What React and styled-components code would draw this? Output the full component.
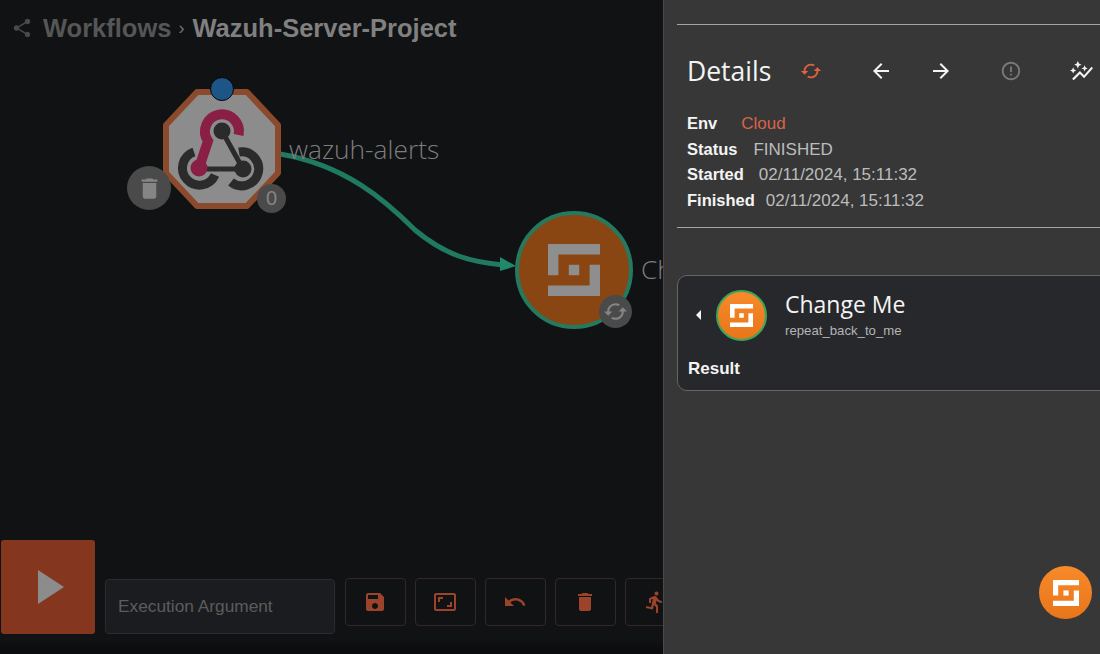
import React from 'react';
import styled, { createGlobalStyle } from 'styled-components';
import {
  MdShare,
  MdDelete,
  MdSave,
  MdAspectRatio,
  MdUndo,
  MdDirectionsRun,
  MdCached,
  MdArrowBack,
  MdArrowForward,
  MdErrorOutline,
  MdAutoGraph,
} from 'react-icons/md';

const GlobalStyle = createGlobalStyle`
  html, body {
    margin: 0;
    padding: 0;
    background: #111214;
    font-family: "Liberation Sans", Arial, sans-serif;
  }
`;

const Page = styled.div`
  display: flex;
  width: 1100px;
  height: 654px;
  overflow: hidden;
`;

const Canvas = styled.main`
  position: relative;
  flex: 0 0 663px;
  display: flex;
  flex-direction: column;
  justify-content: space-between;
  overflow: hidden;
  background: linear-gradient(#111214 0, #111214 640px, #0c0d0e 648px);
`;

const Breadcrumb = styled.header`
  display: flex;
  align-items: center;
  height: 28px;
  padding: 14px 0 0 11px;
  font-size: 25.5px;
  font-weight: 700;
  color: #565656;
`;

const Crumb = styled.span`
  margin-left: 10px;
`;

const Chevron = styled.span`
  margin: 0 8px 0 7px;
  font-size: 18px;
  font-weight: 400;
  color: #707070;
`;

const CurrentCrumb = styled.span`
  color: #808080;
`;

const Edge = styled.svg`
  position: absolute;
  left: 0;
  top: 0;
`;

const Node = styled.div`
  position: absolute;
  left: ${(p) => p.$x}px;
  top: ${(p) => p.$y}px;
`;

const NodeLabel = styled.span`
  position: absolute;
  left: ${(p) => p.$x}px;
  top: ${(p) => p.$y}px;
  font-family: "Open Sans", sans-serif;
  font-weight: 300;
  font-size: 26.3px;
  line-height: 32px;
  white-space: nowrap;
  color: #7d7d7d;
`;

const Round = styled.div`
  position: absolute;
  left: ${(p) => p.$x}px;
  top: ${(p) => p.$y}px;
  width: ${(p) => p.$size}px;
  height: ${(p) => p.$size}px;
  display: flex;
  align-items: center;
  justify-content: center;
  border-radius: 50%;
  background: #4a4a4a;
  color: #858585;
  font-size: 20px;
`;

const Port = styled.div`
  position: absolute;
  left: 210px;
  top: 77px;
  width: 24px;
  height: 24px;
  box-sizing: border-box;
  border: 1px solid #050505;
  border-radius: 50%;
  background: #1d5587;
`;

const ActionNode = styled.div`
  position: absolute;
  left: 515px;
  top: 211px;
  width: 118px;
  height: 118px;
  box-sizing: border-box;
  display: flex;
  align-items: center;
  justify-content: center;
  border: 4px solid #25795f;
  border-radius: 50%;
  background: #8a4612;
`;

const Toolbar = styled.div`
  display: flex;
  align-items: flex-end;
  gap: 10px;
  padding: 0 0 20px 1px;
`;

const PlayButton = styled.button`
  flex: 0 0 94px;
  height: 94px;
  display: flex;
  align-items: center;
  justify-content: center;
  padding: 0;
  border: 0;
  border-radius: 3px;
  background: #85361e;
`;

const PlayTriangle = styled.span`
  width: 0;
  height: 0;
  margin-left: 6px;
  border-style: solid;
  border-width: 17px 0 17px 26px;
  border-color: transparent transparent transparent #8c8c8c;
`;

const ArgumentInput = styled.input`
  flex: none;
  width: 230px;
  min-width: 0;
  height: 55px;
  box-sizing: border-box;
  padding: 0 12px;
  border: 1px solid #2b2c2f;
  border-radius: 4px;
  background: #1b1c1f;
  font-family: "Liberation Sans", Arial, sans-serif;
  font-size: 17.3px;
  outline: none;
  &::placeholder {
    color: #5c5c5c;
    opacity: 1;
  }
`;

const ToolButtons = styled.div`
  display: flex;
  flex: none;
  gap: 9px;
  margin-bottom: 8px;
`;

const ToolButton = styled.button`
  flex: 0 0 61px;
  height: 48px;
  display: flex;
  align-items: center;
  justify-content: center;
  padding: 0 2px 0 0;
  border: 1px solid #33272a;
  border-radius: 4px;
  background: transparent;
  color: #9c432c;
  font-size: 24px;
`;

const Panel = styled.aside`
  position: relative;
  flex: 1;
  min-width: 0;
  box-sizing: border-box;
  padding: 24px 0 0 13px;
  overflow: hidden;
  background: #373737;
  border-left: 1px solid #4a4a4a;
`;

const Rule = styled.hr`
  margin: ${(p) => p.$top || 0}px 0 0;
  border: 0;
  height: 1px;
  background: #a3a3a3;
`;

const DetailsHead = styled.div`
  display: flex;
  align-items: center;
  height: 40px;
  margin: 26px 0 0 10px;
`;

const DetailsTitle = styled.h2`
  margin: 0;
  font-family: "Open Sans", sans-serif;
  font-weight: 400;
  font-size: 26.5px;
  color: #f4f4f4;
`;

const IconSlot = styled.span`
  flex: 0 0 40px;
  display: flex;
  justify-content: center;
  margin-left: ${(p) => p.$gap}px;
  font-size: ${(p) => p.$size || 22}px;
  color: ${(p) => p.$color || '#f4f4f4'};
`;

const InfoList = styled.dl`
  margin: 20px 0 0 10px;
  font-size: 16.5px;
  line-height: 25.7px;
`;

const InfoRow = styled.div`
  display: flex;
`;

const InfoLabel = styled.dt`
  font-weight: 700;
  color: #f4f4f4;
`;

const InfoValue = styled.dd`
  margin: 0 0 0 ${(p) => p.$gap}px;
  font-size: 17px;
  color: ${(p) => p.$color || '#bcbcbc'};
`;

const ResultCard = styled.section`
  position: relative;
  height: 116px;
  box-sizing: border-box;
  margin: 47px -12px 0 0;
  padding: 14px 0 0 18px;
  border: 1px solid #666;
  border-radius: 10px;
  background: #27282c;
`;

const CardHead = styled.div`
  display: flex;
  align-items: center;
`;

const Caret = styled.span`
  width: 0;
  height: 0;
  border-style: solid;
  border-width: 5px 5px 5px 0;
  border-color: transparent #f4f4f4 transparent transparent;
`;

const AppBadge = styled.div`
  width: ${(p) => p.$size}px;
  height: ${(p) => p.$size}px;
  box-sizing: border-box;
  display: flex;
  align-items: center;
  justify-content: center;
  border-radius: 50%;
  border: ${(p) => (p.$ring ? '2px solid #3ba55d' : '0')};
  background: linear-gradient(#f78a2a, #e8751a);
`;

const CardIcon = styled(AppBadge)`
  margin-left: 15px;
`;

const CardText = styled.div`
  margin: -3px 0 0 18px;
`;

const CardTitle = styled.div`
  font-family: "Open Sans", sans-serif;
  font-size: 23px;
  line-height: 30px;
  color: #f4f4f4;
`;

const CardSub = styled.div`
  margin-top: 4px;
  font-size: 13.2px;
  line-height: 16px;
  color: #b5b5b5;
`;

const ResultLabel = styled.div`
  margin: 16px 0 0 -8px;
  font-weight: 700;
  font-size: 17px;
  line-height: 24px;
  color: #f4f4f4;
`;

const Fab = styled.div`
  position: absolute;
  right: 8px;
  bottom: 35px;
`;

const ShuffleMark = ({ size, color }) => (
  <svg width={size} height={size} viewBox="0 0 5 5" fill={color}>
    <path d="M0 0H5V1H1V3H0Z" />
    <path d="M2 2H3V3H2Z" />
    <path d="M4 2H5V5H0V4H4Z" />
  </svg>
);

const WebhookNode = () => (
  <svg width="118" height="120" viewBox="0 0 118 120" fill="none">
    <polygon
      points="34,3 84,3 115,36 115,84 84,117 34,117 3,84 3,36"
      fill="#8c8c8c"
      stroke="#8b4a2b"
      strokeWidth="6"
      strokeLinejoin="round"
    />
    <path d="M59 42L80 80M36 80H80" stroke="#2b2b2b" strokeWidth="5" />
    <path d="M31 63A17 17 0 1 0 52 86" stroke="#2b2b2b" strokeWidth="9" />
    <path d="M76 63A17 17 0 1 1 68 93" stroke="#2b2b2b" strokeWidth="9" />
    <path d="M75.6 46A17 17 0 1 0 45 52L36 79" stroke="#8a1f45" strokeWidth="10" />
    <circle cx="59" cy="42" r="8.5" fill="#2b2b2b" />
    <circle cx="80" cy="80" r="8.5" fill="#2b2b2b" />
    <circle cx="36" cy="79" r="8.5" fill="#8a1f45" />
  </svg>
);

const App = () => {
  return (
    <Page>
      <GlobalStyle />
      <Canvas>
        <Breadcrumb>
          <MdShare size={22} color="#4a4a4a" />
          <Crumb>Workflows</Crumb>
          <Chevron>›</Chevron>
          <CurrentCrumb>Wazuh-Server-Project</CurrentCrumb>
        </Breadcrumb>

        <Edge width="663" height="654" fill="none">
          <path d="M280 154C345 165 385 200 415 230C445 255 470 262 503 265" stroke="#1f7a60" strokeWidth="5" />
          <path d="M500 257L516 266L500 271Z" fill="#1f8a6a" />
        </Edge>
        <Node $x={163} $y={89}>
          <WebhookNode />
        </Node>
        <Port />
        <Round $x={127} $y={166} $size={44}>
          <MdDelete size={27} />
        </Round>
        <Round $x={257} $y={184} $size={29}>0</Round>
        <NodeLabel $x={289} $y={133}>wazuh-alerts</NodeLabel>

        <ActionNode>
          <ShuffleMark size={52} color="#8e8e8e" />
        </ActionNode>
        <Round $x={599} $y={295} $size={33}>
          <MdCached size={25} />
        </Round>
        <NodeLabel $x={641} $y={253}>Change Me</NodeLabel>

        <Toolbar>
          <PlayButton aria-label="Run">
            <PlayTriangle />
          </PlayButton>
          <ArgumentInput placeholder="Execution Argument" />
          <ToolButtons>
            <ToolButton><MdSave /></ToolButton>
            <ToolButton><MdAspectRatio /></ToolButton>
            <ToolButton><MdUndo /></ToolButton>
            <ToolButton><MdDelete /></ToolButton>
            <ToolButton><MdDirectionsRun /></ToolButton>
          </ToolButtons>
        </Toolbar>
      </Canvas>

      <Panel>
        <Rule />
        <DetailsHead>
          <DetailsTitle>Details</DetailsTitle>
          <IconSlot $gap={20} $color="#e0623f"><MdCached /></IconSlot>
          <IconSlot $gap={30} $size={24}><MdArrowBack /></IconSlot>
          <IconSlot $gap={20} $size={24}><MdArrowForward /></IconSlot>
          <IconSlot $gap={30} $color="#7a7a7a"><MdErrorOutline /></IconSlot>
          <IconSlot $gap={30} $size={25}><MdAutoGraph /></IconSlot>
        </DetailsHead>
        <InfoList>
          <InfoRow>
            <InfoLabel>Env</InfoLabel>
            <InfoValue $gap={24} $color="#d9634a">Cloud</InfoValue>
          </InfoRow>
          <InfoRow>
            <InfoLabel>Status</InfoLabel>
            <InfoValue $gap={16}>FINISHED</InfoValue>
          </InfoRow>
          <InfoRow>
            <InfoLabel>Started</InfoLabel>
            <InfoValue $gap={15}>02/11/2024, 15:11:32</InfoValue>
          </InfoRow>
          <InfoRow>
            <InfoLabel>Finished</InfoLabel>
            <InfoValue $gap={11}>02/11/2024, 15:11:32</InfoValue>
          </InfoRow>
        </InfoList>
        <Rule $top={13} />
        <ResultCard>
          <CardHead>
            <Caret />
            <CardIcon $size={51} $ring>
              <ShuffleMark size={23} color="#fff" />
            </CardIcon>
            <CardText>
              <CardTitle>Change Me</CardTitle>
              <CardSub>repeat_back_to_me</CardSub>
            </CardText>
          </CardHead>
          <ResultLabel>Result</ResultLabel>
        </ResultCard>
        <Fab>
          <AppBadge $size={53}>
            <ShuffleMark size={26} color="#fff" />
          </AppBadge>
        </Fab>
      </Panel>
    </Page>
  );
};

export default App;
